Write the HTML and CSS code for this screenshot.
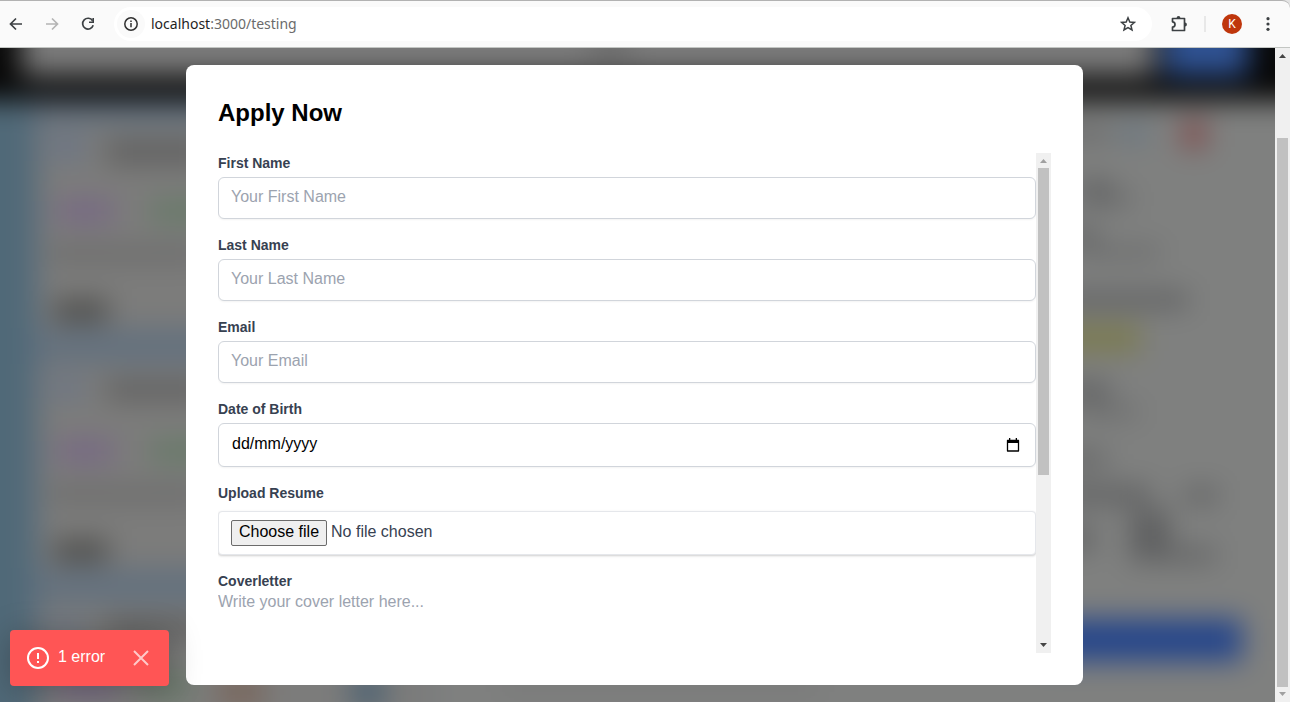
FILE: index.html
```html
<!DOCTYPE html>
<html lang="en-GB">
<head>
<meta charset="utf-8">
<title>Apply Now</title>
<link rel="stylesheet" href="styles.css">
</head>
<body>
<header class="toolbar">
  <div class="nav">
    <button class="icon-button" aria-label="Back"><svg width="16" height="16" viewBox="0 0 16 16"><path d="M14 8H3M8 2.500L2.500 8L8 13.500" fill="none" stroke="#3c4043" stroke-width="1.700"/></svg></button>
    <button class="icon-button" aria-label="Forward" disabled><svg width="16" height="16" viewBox="0 0 16 16"><path d="M2 8H13M8 2.500L13.500 8L8 13.500" fill="none" stroke="#b4b4b4" stroke-width="1.700"/></svg></button>
    <button class="icon-button" aria-label="Reload"><svg width="16" height="16" viewBox="0 0 16 16"><path d="M12.600 4.700A5.400 5.400 0 1 0 13.200 9.300" fill="none" stroke="#3c4043" stroke-width="1.700"/><path d="M14 2V7H9V5.500H12.400V2Z" fill="#3c4043"/></svg></button>
  </div>
  <div class="address">
    <button class="icon-button site-info" aria-label="Site information"><svg width="16" height="16" viewBox="0 0 16 16"><circle cx="8" cy="8" r="6.200" fill="none" stroke="#303030" stroke-width="1.500"/><path d="M8 7V11.300M8 4.500V6" stroke="#303030" stroke-width="1.500"/></svg></button>
    <div class="url"><span class="host">localhost</span>:3000/testing</div>
    <button class="icon-button" aria-label="Bookmark"><svg width="16" height="16" viewBox="0 0 16 16"><path d="M8 1.800L9.800 6L14.400 6.400L10.900 9.400L12 13.900L8 11.500L4 13.900L5.100 9.400L1.600 6.400L6.200 6Z" fill="none" stroke="#3c4043" stroke-width="1.500"/></svg></button>
  </div>
  <div class="tools">
    <button class="icon-button" aria-label="Extensions"><svg width="18" height="18" viewBox="0 0 18 18"><path d="M2.500 3.500H14.500V15.500H2.500V12.200Q5 12 5 9.500Q5 7 2.500 6.800Z" fill="none" stroke="#3c4043" stroke-width="1.700" stroke-linejoin="round"/><path d="M6.600 3A1.900 1.900 0 0 1 10.400 3ZM15 7.600A1.900 1.900 0 0 1 15 11.400Z" fill="#3c4043"/></svg></button>
    <span class="divider"></span>
    <button class="avatar" aria-label="Profile">K</button>
    <button class="icon-button" aria-label="Menu"><svg width="16" height="16" viewBox="0 0 16 16" fill="#3c4043"><circle cx="8" cy="2.700" r="1.600"/><circle cx="8" cy="8" r="1.600"/><circle cx="8" cy="13.300" r="1.600"/></svg></button>
  </div>
</header>

<div class="viewport">
  <main class="page">
    <svg class="backdrop" viewBox="0 0 1275 654" preserveAspectRatio="none" aria-hidden="true">
      <defs>
        <filter id="soft" filterUnits="userSpaceOnUse" x="-80" y="-80" width="1435" height="814" color-interpolation-filters="sRGB"><feGaussianBlur stdDeviation="14"/></filter>
      </defs>
      <rect width="1275" height="654" fill="#7f7f7f"/>
      <g filter="url(#soft)">
        <rect x="-80" y="-80" width="1435" height="814" fill="#7f807f"/>
        <rect x="-80" y="50" width="112" height="700" fill="#506978"/>
        <rect x="32" y="50" width="400" height="700" fill="#64717e"/>
        <rect x="40" y="76" width="390" height="204" fill="#7c7c7b"/>
        <rect x="40" y="316" width="390" height="204" fill="#7c7c7b"/>
        <rect x="40" y="556" width="390" height="200" fill="#7c7c7b"/>
        <rect x="-80" y="-80" width="1435" height="133" fill="#080808"/>
        <rect x="22" y="-80" width="1132" height="108" fill="#7b7b7b"/>
        <rect x="590" y="-10" width="40" height="16" fill="#626262"/>
        <rect x="1164" y="-80" width="84" height="108" fill="#2f5292"/>
        <g fill="#6b7585"><rect x="50" y="86" width="34" height="28"/><rect x="50" y="330" width="34" height="22"/><rect x="50" y="574" width="34" height="20"/></g>
        <g fill="#606060"><rect x="106" y="92" width="100" height="24"/><rect x="106" y="332" width="100" height="20"/><rect x="106" y="570" width="100" height="20"/></g>
        <g fill="#776884"><rect x="56" y="151" width="58" height="24"/><rect x="56" y="391" width="58" height="24"/><rect x="56" y="626" width="60" height="24"/></g>
        <g fill="#687b69"><rect x="150" y="151" width="60" height="24"/><rect x="150" y="391" width="60" height="24"/><rect x="142" y="626" width="50" height="24"/></g>
        <g fill="#6b6b6b"><rect x="50" y="198" width="150" height="16"/><rect x="50" y="438" width="150" height="16"/></g>
        <g fill="#4d4d4b"><rect x="54" y="252" width="54" height="22"/><rect x="54" y="492" width="54" height="22"/></g>
        <rect x="218" y="628" width="46" height="32" fill="#7a675d"/>
        <rect x="350" y="628" width="36" height="32" fill="#4d6272"/>
        <rect x="500" y="632" width="320" height="10" fill="#757575"/>
        <g fill="#5f6061">
          <rect x="1080" y="132" width="30" height="14"/><rect x="1080" y="146" width="52" height="10"/>
          <rect x="1070" y="180" width="26" height="16"/><rect x="1080" y="200" width="80" height="8"/>
          <rect x="1060" y="244" width="128" height="16"/>
          <rect x="1060" y="334" width="50" height="18"/><rect x="1080" y="360" width="58" height="8"/>
          <rect x="1060" y="404" width="46" height="14"/><rect x="1060" y="438" width="90" height="18"/><rect x="1184" y="440" width="34" height="15"/>
          <rect x="1130" y="462" width="40" height="38"/><rect x="1130" y="500" width="86" height="14"/><rect x="1060" y="480" width="34" height="22"/>
        </g>
        <rect x="1120" y="77" width="28" height="16" fill="#637482"/>
        <rect x="1060" y="78" width="50" height="14" fill="#676869"/>
        <rect x="1182" y="72" width="24" height="28" fill="#804c4c"/>
        <rect x="1060" y="276" width="80" height="28" fill="#7b7b50"/>
        <rect x="1040" y="571" width="202" height="42" fill="#26468a"/>
      </g>
    </svg>
    <section class="modal" role="dialog" aria-labelledby="modal-title">
      <h2 class="modal-title" id="modal-title">Apply Now</h2>
      <div class="modal-body">
        <form class="form">
          <div class="field">
            <label for="first-name">First Name</label>
            <input class="control" id="first-name" type="text" placeholder="Your First Name">
          </div>
          <div class="field">
            <label for="last-name">Last Name</label>
            <input class="control" id="last-name" type="text" placeholder="Your Last Name">
          </div>
          <div class="field">
            <label for="email">Email</label>
            <input class="control" id="email" type="email" placeholder="Your Email">
          </div>
          <div class="field">
            <label for="birth">Date of Birth</label>
            <div class="control date">
              <input class="date-input" id="birth" type="text" placeholder="dd/mm/yyyy">
              <button class="icon-button" type="button" aria-label="Show date picker"><svg width="16" height="16" viewBox="0 0 16 16"><path d="M2.500 3.500H13.500V14H2.500Z" fill="none" stroke="#000" stroke-width="1.300" stroke-linejoin="round"/><path d="M2 3H14V6H2ZM4 1H5.300V3H4ZM10.700 1H12V3H10.700Z"/></svg></button>
            </div>
          </div>
          <div class="field">
            <label for="resume-button">Upload Resume</label>
            <div class="control file">
              <button class="file-button" id="resume-button" type="button">Choose file</button>
              <span>No file chosen</span>
            </div>
          </div>
          <div class="field">
            <label for="cover">Coverletter</label>
            <textarea class="cover" id="cover" rows="4" placeholder="Write your cover letter here..."></textarea>
          </div>
        </form>
        <div class="scrollbar form-scroll" aria-hidden="true">
          <svg class="arrow muted" viewBox="0 0 15 15"><path d="M4 10H11L7.500 6Z"/></svg>
          <div class="track"><div class="thumb"></div></div>
          <svg class="arrow" viewBox="0 0 15 15"><path d="M4 5H11L7.500 9Z"/></svg>
        </div>
      </div>
    </section>
    <aside class="toast">
      <svg width="24" height="24" viewBox="0 0 24 24" fill="none" stroke="#fff" stroke-width="2"><circle cx="12" cy="12" r="10"/><path d="M12 7V13M12 15V17"/></svg>
      <span class="toast-text">1 error</span>
      <button class="icon-button" aria-label="Dismiss"><svg width="28" height="28" viewBox="0 0 28 28"><path d="M7 7L21 21M21 7L7 21" stroke="#ffc9c9" stroke-width="2"/></svg></button>
    </aside>
  </main>
  <div class="scrollbar page-scroll" aria-hidden="true">
    <svg class="arrow" viewBox="0 0 15 15"><path d="M4 10H11L7.500 6Z"/></svg>
    <div class="track"><div class="thumb"></div></div>
    <svg class="arrow muted" viewBox="0 0 15 15"><path d="M4 5H11L7.500 9Z"/></svg>
  </div>
</div>
</body>
</html>
```

FILE: styles.css
```css
* { box-sizing: border-box; }
body {
  margin: 0;
  height: 100vh;
  display: flex;
  flex-direction: column;
  overflow: hidden;
  background: #e4e4e4;
  font: 16px/24px "Liberation Sans", Arial, sans-serif;
}
button, input, textarea { font: inherit; }
.icon-button {
  display: flex;
  align-items: center;
  justify-content: center;
  padding: 0;
  border: 0;
  background: none;
}

.toolbar {
  display: flex;
  align-items: center;
  flex: none;
  height: 48px;
  padding: 0 14px 0 8px;
  background: #fafafa;
  border-top: 1px solid #b2b2b2;
  border-bottom: 1px solid #c3c6c3;
  border-top-right-radius: 8px;
}
.nav { display: flex; gap: 20px; margin-right: 18px; }
.address {
  display: flex;
  align-items: center;
  flex: 1;
  height: 34px;
  padding: 0 16px 0 3px;
  border-radius: 17px;
  background: #fff;
}
.site-info {
  width: 28px;
  height: 28px;
  margin-right: 6px;
  border-radius: 14px;
  background: #fafafa;
}
.url {
  flex: 1;
  color: #6b6b6b;
  font: 14px/20px "Noto Sans", "Open Sans", sans-serif;
}
.host { color: #1f1f1f; }
.tools { display: flex; align-items: center; margin-left: 18px; }
.divider { width: 2px; height: 16px; margin: 0 16px 0 16px; background: #e8e8e8; }
.avatar {
  width: 20px;
  height: 20px;
  margin-right: 18px;
  padding: 0;
  border: 0;
  border-radius: 50%;
  background: #bf360c;
  color: #fff;
  font: 12px/20px Roboto, sans-serif;
}

.viewport { display: flex; flex: 1; min-height: 0; }
.page {
  position: relative;
  display: flex;
  align-items: center;
  justify-content: center;
  flex: 1;
  min-width: 0;
  padding-right: 6px;
  overflow: hidden;
}
.backdrop { position: absolute; inset: 0; width: 100%; height: 100%; }

.modal {
  position: relative;
  width: 100%;
  max-width: 897px;
  padding: 32px;
  border-radius: 8px;
  background: #fff;
}
.modal-title { margin: 0 0 24px; color: #000; font-size: 24px; line-height: 32px; }
.modal-body { display: flex; height: 500px; }
.form {
  display: flex;
  flex-direction: column;
  gap: 16px;
  flex: 1;
  min-width: 0;
  overflow: hidden;
}
.field { flex: none; }
.field label {
  display: block;
  color: #374151;
  font-size: 14px;
  font-weight: 700;
  line-height: 20px;
}
.control {
  display: block;
  width: 100%;
  height: 42px;
  margin-top: 4px;
  padding: 6px 12px 8px;
  border: 1px solid #d1d5db;
  border-radius: 6px;
  background: #fff;
  box-shadow: 0 1px 2px rgba(0, 0, 0, 0.05);
}
.control::placeholder, .cover::placeholder { color: #9ca3af; opacity: 1; }
.date { display: flex; align-items: center; height: 44px; padding: 6px 14px 6px 13px; }
.date-input { flex: 1; min-width: 0; padding: 0 0 2px; border: 0; }
.date-input::placeholder { color: #000; opacity: 1; }
.file {
  display: flex;
  align-items: flex-start;
  gap: 4px;
  height: 44px;
  margin-top: 8px;
  padding: 8px 12px;
  border-color: #e5e7eb;
  border-radius: 4px;
  box-shadow: 0 1px 3px rgba(0, 0, 0, 0.1), 0 1px 2px rgba(0, 0, 0, 0.1);
  color: #374151;
}
.file-button {
  height: 26px;
  padding: 0 7px 2px;
  border: 1px solid #6b6b6b;
  border-radius: 2px;
  background: #efefef;
  color: #000;
  line-height: 22px;
}
.cover { display: block; width: 100%; padding: 0; border: 0; resize: none; line-height: 22px; }

.scrollbar { display: flex; flex-direction: column; flex: none; width: 15px; background: #f0f0f0; }
.arrow { flex: none; width: 15px; height: 15px; fill: #454545; }
.muted { fill: #a0a0a0; }
.track { display: flex; flex-direction: column; flex: 1; padding: 0 2px; }
.thumb { background: #c1c1c1; }
.form-scroll .thumb { height: 307px; }
.page-scroll .track { justify-content: flex-end; }
.page-scroll .thumb { height: 88%; }

.toast {
  position: absolute;
  left: 10px;
  bottom: 16px;
  display: flex;
  align-items: center;
  height: 56px;
  padding: 0 14px 0 16px;
  border-radius: 4px;
  background: #ff5555;
  color: #fff;
  box-shadow: 0 4px 32px rgba(0, 0, 0, 0.25);
}
.toast-text { margin: 0 22px 2px 8px; }
```
